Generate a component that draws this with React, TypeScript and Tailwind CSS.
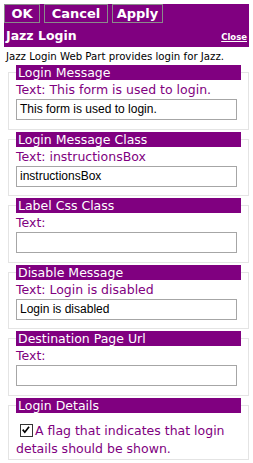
import React from "react";

const purple = "bg-[#800080]";

function Section({ title, label, value }: { title: string; label: string; value: string }) {
  return (
    <fieldset className="mx-2 mt-[2px] border border-[#e4e4e4] pl-[7px] pr-[7px] pb-[8.5px]">
      <legend className={`${purple} w-[225px] h-[15px] pl-[2px] text-white text-[12.5px] leading-[15px]`}>{title}</legend>
      <div className="text-[#800080] text-[12.5px] leading-[14px] mt-[3px]">{label}</div>
      <div className="mt-[2px] w-[221px] h-[21px] border border-[#a6a6a6] px-[3px] text-[12px] leading-[19px] text-black font-['Liberation_Sans',Arial,sans-serif]">
        {value}
      </div>
    </fieldset>
  );
}

export default function App() {
  const buttons: [string, string][] = [
    ["OK", "w-[36px]"],
    ["Cancel", "w-[64px]"],
    ["Apply", "w-[51px]"],
  ];
  return (
    <div className="w-[253px] h-[463px] bg-white pt-1 font-['DejaVu_Sans',Verdana,sans-serif] overflow-hidden">
      <div className={`mx-1 ${purple} h-[43px]`}>
        <div className="flex gap-1 h-[19px]">
          {buttons.map(([b, w]) => (
            <div key={b} className={`${w} border border-[#8a8a8a] text-center text-white font-bold text-[13px] leading-[17px]`}>
              {b}
            </div>
          ))}
        </div>
        <div className="flex justify-between items-end px-[2px] mt-[4px]">
          <span className="text-white font-bold text-[12.5px] leading-[17px]">Jazz Login</span>
          <span className="text-white font-bold text-[8.5px] underline leading-[13px]">Close</span>
        </div>
      </div>
      <p className="px-1.5 text-[10.2px] leading-[12px] mt-[4px] mb-[1px] text-black whitespace-nowrap">
        Jazz Login Web Part provides login for Jazz.
      </p>
      <Section title="Login Message" label="Text: This form is used to login." value="This form is used to login." />
      <Section title="Login Message Class" label="Text: instructionsBox" value="instructionsBox" />
      <Section title="Label Css Class" label="Text:" value="" />
      <Section title="Disable Message" label="Text: Login is disabled" value="Login is disabled" />
      <Section title="Destination Page Url" label="Text:" value="" />
      <fieldset className="mx-2 mt-[2px] border border-[#e4e4e4] pl-[7px] pr-[7px] pb-[1.5px]">
        <legend className={`${purple} w-[225px] h-[15px] pl-[2px] text-white text-[12.5px] leading-[15px]`}>Login Details</legend>
        <div className="text-[#800080] text-[12.5px] leading-[18px] mt-[9px]">
          <span className="inline-block align-[-2px] ml-[4px] mr-[2px] w-[13px] h-[13px] border border-[#333] bg-white relative">
            <svg viewBox="0 0 13 13" className="absolute left-0 top-0 w-[11px] h-[11px]">
              <path d="M2 5.5 L4.5 8.5 L9.5 2" stroke="#000" strokeWidth="2" fill="none" />
            </svg>
          </span>
          A flag that indicates that login details should be shown.
        </div>
      </fieldset>
    </div>
  );
}
